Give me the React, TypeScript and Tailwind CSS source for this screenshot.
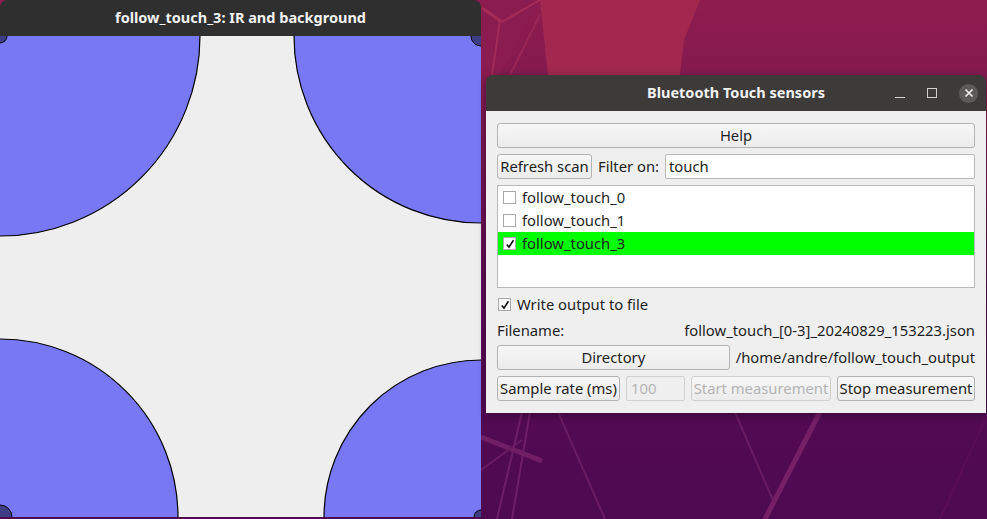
import React from "react";

const font = { fontFamily: '"Noto Sans", "DejaVu Sans", sans-serif' };

function Btn({ children, className = "", disabled = false }: { children: React.ReactNode; className?: string; disabled?: boolean }) {
  return (
    <div
      className={
        "flex items-center justify-center h-[25px] rounded-[3px] border bg-gradient-to-b from-[#f7f7f7] to-[#ececec] text-[14.8px] leading-none whitespace-nowrap " +
        (disabled ? "border-[#d0d0d0] text-[#b4b4b4] " : "border-[#b3b3b3] text-[#1f1f1f] ") +
        className
      }
    >
      {children}
    </div>
  );
}

function Check({ checked, bg = "bg-white" }: { checked?: boolean; bg?: string }) {
  return (
    <div className={"w-[13px] h-[13px] border border-[#a9a9a9] flex items-center justify-center shrink-0 " + bg}>
      {checked && (
        <svg width="10" height="10" viewBox="0 0 10 10">
          <path d="M1.8 5.4 L4 8.2 L8.4 1.2" stroke="#111" strokeWidth="1.6" fill="none" />
        </svg>
      )}
    </div>
  );
}

function Background() {
  return (
    <svg className="absolute inset-0" width="987" height="519" viewBox="0 0 987 519">
      <defs>
        <linearGradient id="bg" gradientUnits="userSpaceOnUse" x1="0" y1="0" x2="0" y2="519">
          <stop offset="0" stopColor="#8f1c4e" />
          <stop offset="0.15" stopColor="#841a4f" />
          <stop offset="0.55" stopColor="#5c0b54" />
          <stop offset="0.78" stopColor="#530a53" />
          <stop offset="1" stopColor="#4e0a50" />
        </linearGradient>
      </defs>
      <rect width="987" height="519" fill="url(#bg)" />
      <polygon points="540,0 700,0 684,40 680,75 548,75" fill="#a3284f" />
      <polygon points="480,0 540,0 500,75 480,75" fill="#8a1c4f" />
      <line x1="482" y1="8" x2="502" y2="22" stroke="#a32d58" strokeWidth="3" />
      <line x1="502" y1="22" x2="540" y2="0" stroke="#a32d58" strokeWidth="2" />
      <line x1="500" y1="20" x2="492" y2="75" stroke="#a02a58" strokeWidth="2" />
      <line x1="540" y1="15" x2="510" y2="75" stroke="#9a2656" strokeWidth="2" />
      <line x1="522" y1="412" x2="497" y2="519" stroke="#6e1e66" strokeWidth="2" />
      <line x1="530" y1="412" x2="512" y2="519" stroke="#6e1e66" strokeWidth="2" />
      <line x1="558" y1="412" x2="605" y2="519" stroke="#6a1c62" strokeWidth="2" />
      <line x1="481" y1="437" x2="542" y2="461" stroke="#701f66" strokeWidth="5" />
      <line x1="481" y1="470" x2="522" y2="440" stroke="#6a1c62" strokeWidth="2" />
      <line x1="735" y1="412" x2="775" y2="505" stroke="#6a1c62" strokeWidth="2" />
      <line x1="820" y1="412" x2="765" y2="519" stroke="#751f66" strokeWidth="5" />
      <line x1="940" y1="519" x2="987" y2="415" stroke="#5a0d56" strokeWidth="2" />
    </svg>
  );
}

function IRCanvas() {
  return (
    <svg width="481" height="481" viewBox="0 0 481 481" className="block">
      <rect width="481" height="481" fill="#eeeeee" />
      <circle cx="0" cy="0" r="200" fill="#7878f5" stroke="#000" strokeWidth="1.2" />
      <circle cx="481" cy="0" r="187" fill="#7878f5" stroke="#000" strokeWidth="1.2" />
      <circle cx="0" cy="481" r="178" fill="#7878f5" stroke="#000" strokeWidth="1.2" />
      <circle cx="481" cy="481" r="157" fill="#7878f5" stroke="#000" strokeWidth="1.2" />
      <circle cx="0" cy="0" r="7" fill="#3e3e86" stroke="#000" strokeWidth="1" />
      <circle cx="481" cy="0" r="10" fill="#3e3e86" stroke="#000" strokeWidth="1" />
      <circle cx="0" cy="481" r="12" fill="#3e3e86" stroke="#000" strokeWidth="1" />
      <circle cx="481" cy="481" r="7" fill="#3e3e86" stroke="#000" strokeWidth="1" />
    </svg>
  );
}

export default function App() {
  return (
    <div className="relative w-[987px] h-[519px] overflow-hidden bg-[#5a0c52]" style={font}>
      <Background />

      {/* Left window */}
      <div className="absolute left-0 top-0 w-[481px] flex flex-col">
        <div className="h-[36px] bg-[#2f2f2f] rounded-t-[7px] flex items-center justify-center text-[#f2f2f2] font-bold text-[14.5px]">
          follow_touch_3: IR and background
        </div>
        <IRCanvas />
      </div>

      {/* Right window */}
      <div className="absolute left-[486px] top-[75px] w-[500px] flex flex-col shadow-[0_2px_8px_rgba(0,0,0,0.35)] rounded-t-[7px]">
        <div className="relative h-[36px] bg-[#3c3b39] rounded-t-[7px] flex items-center justify-center text-[#f2f2f2] font-bold text-[14.5px]">
          Bluetooth Touch sensors
          <div className="absolute right-[8px] top-0 h-full flex items-center gap-[22px]">
            <div className="w-[10px] h-[10px] flex items-end">
              <div className="w-[10px] h-[1px] bg-[#cfcfcf]" />
            </div>
            <div className="w-[10px] h-[10px] border border-[#cfcfcf]" />
            <div className="w-[19px] h-[19px] rounded-full bg-[#5c5b59] flex items-center justify-center">
              <svg width="10" height="10" viewBox="0 0 10 10">
                <path d="M1.5 1.5 L8.5 8.5 M8.5 1.5 L1.5 8.5" stroke="#f0f0f0" strokeWidth="1.6" />
              </svg>
            </div>
          </div>
        </div>

        <div className="bg-[#efefef] px-[11px] pt-[12px] pb-[12px] flex flex-col text-[14.8px] leading-none text-[#1f1f1f]">
          <Btn className="w-full h-[24px]">Help</Btn>

          <div className="flex items-center mt-[6px] h-[25px]">
            <Btn className="w-[95px]">Refresh scan</Btn>
            <span className="ml-[6px] mr-[6px] whitespace-nowrap">Filter on:</span>
            <div className="flex-1 h-[25px] bg-white border border-[#b9b9b9] rounded-[2px] flex items-center px-[3px]">touch</div>
          </div>

          <div className="mt-[6px] h-[103px] bg-white border border-[#b9b9b9] flex flex-col">
            {["follow_touch_0", "follow_touch_1"].map((n) => (
              <div key={n} className="h-[23px] flex items-center pl-[5px] gap-[6px]">
                <Check />
                <span>{n}</span>
              </div>
            ))}
            <div className="h-[23px] flex items-center pl-[5px] gap-[6px] bg-[#00ff00]">
              <Check checked />
              <span>follow_touch_3</span>
            </div>
          </div>

          <div className="flex items-center mt-[8px] h-[17px] gap-[6px] pl-[1px]">
            <Check checked bg="bg-[#f7f7f7]" />
            <span>Write output to file</span>
          </div>

          <div className="flex items-center justify-between mt-[9px] h-[17px]">
            <span>Filename:</span>
            <span>follow_touch_[0-3]_20240829_153223.json</span>
          </div>

          <div className="flex items-center mt-[6px] h-[25px] gap-[6px]">
            <Btn className="w-[233px]">Directory</Btn>
            <span className="flex-1 text-right whitespace-nowrap">/home/andre/follow_touch_output</span>
          </div>

          <div className="flex items-center mt-[6px] h-[25px] gap-[6px]">
            <Btn className="w-[123px]">Sample rate (ms)</Btn>
            <div className="w-[59px] h-[25px] border border-[#d0d0d0] rounded-[2px] bg-[#efefef] text-[#b4b4b4] flex items-center px-[4px]">100</div>
            <Btn disabled className="w-[140px]">Start measurement</Btn>
            <Btn className="flex-1">Stop measurement</Btn>
          </div>
        </div>
      </div>
    </div>
  );
}
